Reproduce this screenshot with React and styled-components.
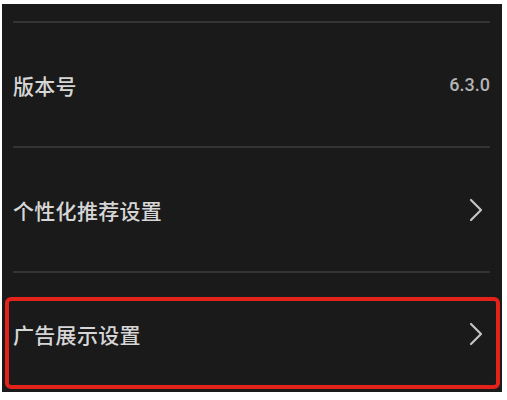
import React from "react";
import styled, { createGlobalStyle } from "styled-components";

const GlobalStyle = createGlobalStyle`
  html, body {
    margin: 0;
    padding: 0;
    background: #ffffff;
  }
  body {
    font-family: "Noto Sans CJK SC", "Noto Sans", sans-serif;
  }
`;

const Page = styled.div`
  padding: 4px 5px 8px 2px;
  width: 507px;
  height: 400px;
  box-sizing: border-box;
`;

const Panel = styled.div`
  background: #1a1a1a;
  height: 388px;
  padding-top: 17px;
  box-sizing: border-box;
  overflow: hidden;
`;

const Divider = styled.div`
  height: 2px;
  margin: 0 12px 0 11px;
  background: #343434;
`;

const Row = styled.div`
  position: relative;
  display: flex;
  align-items: center;
  justify-content: space-between;
  height: ${(p) => p.$height || 123}px;
  padding: 0 19px 0 11px;
  box-sizing: border-box;
`;

const Label = styled.span`
  color: #d6d6d6;
  font-size: 21px;
  font-weight: 500;
  letter-spacing: 0.3px;
`;

const Value = styled.span`
  color: #b4b4b4;
  font-family: Roboto, "Liberation Sans", sans-serif;
  font-size: 18px;
  font-weight: 500;
  margin-right: -7px;
`;

const Highlight = styled.div`
  position: absolute;
  left: 3px;
  right: 2px;
  top: 24px;
  bottom: 6px;
  border: 4px solid #e3221a;
  border-radius: 6px;
  pointer-events: none;
`;

const Chevron = () => (
  <svg width="14" height="24" viewBox="0 0 14 24" fill="none">
    <path
      d="M2 2 L12 12 L2 22"
      stroke="#c4c4c4"
      strokeWidth="2.2"
      strokeLinecap="round"
      strokeLinejoin="round"
    />
  </svg>
);

export default function App() {
  return (
    <>
      <GlobalStyle />
      <Page>
        <Panel>
          <Divider />
          <Row>
            <Label>版本号</Label>
            <Value>6.3.0</Value>
          </Row>
          <Divider />
          <Row>
            <Label>个性化推荐设置</Label>
            <Chevron />
          </Row>
          <Divider />
          <Row $height={122}>
            <Label>广告展示设置</Label>
            <Chevron />
            <Highlight />
          </Row>
        </Panel>
      </Page>
    </>
  );
}
